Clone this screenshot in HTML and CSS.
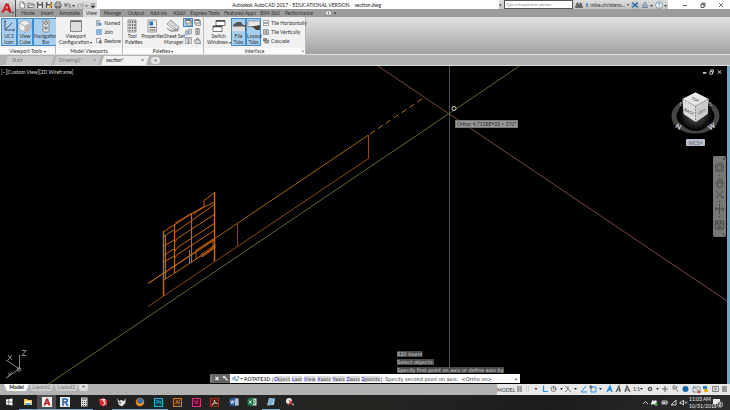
FILE: index.html
```html
<!DOCTYPE html>
<html lang="en">
<head>
<meta charset="utf-8">
<title>Autodesk AutoCAD 2017 - section.dwg</title>
<link rel="stylesheet" href="styles.css">
</head>
<body>
<svg class="defs" aria-hidden="true">
  <symbol id="doc" viewBox="0 0 8 8"><path d="M2 1h3l1.500 1.500V7H2zM5 1v2h1.500" fill="#fff" stroke="#555" stroke-width=".6"/></symbol>
  <symbol id="save" viewBox="0 0 8 8"><path d="M1 1h6v6H1z" fill="#555"/><path d="M2.500 1h3v2h-3zM2.200 4.500h3.600V7H2.200z" fill="#eee"/></symbol>
  <symbol id="list" viewBox="0 0 12 12"><path d="M1 1h10v10H1z" fill="#fff" stroke="#666"/><path d="M1 3h10M3 5h6M3 7h6M3 9h6M6 3v8" stroke="#777" fill="none"/></symbol>
  <symbol id="win" viewBox="0 0 12 12"><path d="M3 3h8v8H3z" fill="#ddd" stroke="#666"/><path d="M1 1h8v6H1z" fill="#fff" stroke="#555"/><path d="M1 2h8" stroke="#555" stroke-width="2"/></symbol>
</svg>
<div class="app">
  <header class="titlebar">
    <div class="quick">
      <button aria-label="New"><svg><use href="#doc"/></svg></button>
      <button aria-label="Open"><svg viewBox="0 0 8 8"><path d="M1 6.500V2h2l1 1h2.500v1M1 6.500L2.500 4H7.500L6 6.500z" fill="#eee" stroke="#555" stroke-width=".7"/></svg></button>
      <button aria-label="Save"><svg><use href="#save"/></svg></button>
      <button aria-label="Save as"><svg viewBox="0 0 8 8"><use href="#save"/><path d="M4 7l3-4" stroke="#e39b35" stroke-width="1.500"/></svg></button>
      <button aria-label="Plot"><svg viewBox="0 0 8 8"><path d="M2 3V1h4v2M1 3h6v3H1zM2 5h4v2H2z" fill="#eee" stroke="#444" stroke-width=".8"/></svg></button>
      <button aria-label="Undo" class="wide"><svg viewBox="0 0 12 8"><path d="M2 2v3h3M2 5c1-3 5-3 5 0v2" fill="none" stroke="#666"/><path d="M9 4h3l-1.500 2z" fill="#444"/></svg></button>
      <button aria-label="Redo" class="wide"><svg viewBox="0 0 12 8"><path d="M7 2v3H4M7 5c-1-3-5-3-5 0v2" fill="none" stroke="#aaa"/><path d="M9 4h3l-1.500 2z" fill="#777"/></svg></button>
      <button aria-label="Customize"><svg viewBox="0 0 8 8"><path d="M2 3h4M2 5h4L4 7z" fill="#333" stroke="#333" stroke-width=".6"/></svg></button>
    </div>
    <div class="caption"><span>Autodesk AutoCAD 2017 - EDUCATIONAL VERSION</span><span>section.dwg</span></div>
    <div class="info">
      <svg class="tiny" viewBox="0 0 4 8"><path d="M1 2l2 2-2 2z" fill="#222"/></svg>
      <input class="search" aria-label="Search" placeholder="Type a keyword or phrase">
      <button aria-label="Find"><svg viewBox="0 0 8 8"><path d="M2 2h1v2h2V2h1l1.500 4.500h-3V5h-1v1.500h-3z" fill="#777" stroke="#333" stroke-width=".6"/></svg></button>
      <button class="user"><svg viewBox="0 0 8 8"><circle cx="4" cy="2.500" r="2" fill="#2b7cd0"/><path d="M1 7c1-3 5-3 6 0z" fill="#2b5fa8"/></svg>mike.christens...<i>▾</i></button>
      <button aria-label="Exchange"><svg viewBox="0 0 8 8"><path d="M1 1.500l6 5M1 6.500l6-5" stroke="#1d5d9b" stroke-width="1.400"/><path d="M1 1h6v6H1z" fill="none" stroke="#8ab" stroke-width=".5"/></svg></button>
      <button aria-label="Connect" class="wide"><svg viewBox="0 0 12 8"><path d="M4 1L6.500 5h-5zM1 6.500h6" fill="#bcd" stroke="#579" stroke-width=".8"/><path d="M9 4h3l-1.500 2z" fill="#444"/></svg></button>
      <button aria-label="Help" class="wide help"><svg viewBox="0 0 12 8"><circle cx="4" cy="4" r="3.300" fill="#fff" stroke="#567" stroke-width=".6"/><path d="M3 3.200c0-1.500 2.200-1.300 2 0-.1.700-1 .7-1 1.500M4 5.400v.9" fill="none" stroke="#1d6fb8" stroke-width=".9"/><path d="M9 4h3l-1.500 2z" fill="#444"/></svg></button>
    </div>
    <div class="winctl">
      <button aria-label="Minimize"><svg viewBox="0 0 8 8"><path d="M2 4.500h4" stroke="#333" stroke-width=".8"/></svg></button>
      <button aria-label="Restore"><svg viewBox="0 0 8 8"><path d="M2 3.500h3v3H2zM3 3V2h3v3H5" fill="none" stroke="#333" stroke-width=".8"/></svg></button>
      <button aria-label="Close"><svg viewBox="0 0 8 8"><path d="M2 2l4 4M6 2L2 6" stroke="#333" stroke-width=".7"/></svg></button>
    </div>
  </header>
  <button class="appmenu" aria-label="Application menu"><svg viewBox="0 0 16 14"><path d="M1.500 11L6 1h3l3.500 10H9.500L8.800 8.500H5L3.800 11z" fill="#c4161c"/><path d="M6 6.500L7.500 3l1 3.500z" fill="#c8c8c8"/><path d="M6 1h1L4 8 1.500 11z" fill="#e8474c"/><path d="M12.500 10.500h2.500l-1.200 1.500z" fill="#222"/></svg></button>

  <nav class="ribbon-tabs">
    <a href="#">Home</a><a href="#">Insert</a><a href="#">Annotate</a><a href="#" class="active">View</a><a href="#">Manage</a><a href="#">Output</a><a href="#">Add-ins</a><a href="#">A360</a><a href="#">Express Tools</a><a href="#">Featured Apps</a><a href="#">BIM 360</a><a href="#">Performance</a>
    <button aria-label="Ribbon display"><svg viewBox="0 0 12 6"><rect x=".5" y="1" width="6" height="4" rx="1" fill="#eee" stroke="#666" stroke-width=".5"/><path d="M2.500 3.500L3.500 2l1 1.500zM8.500 2.500h3L10 4.500z" fill="#333"/></svg></button>
  </nav>

  <div class="ribbon">
    <section class="panel p-view">
      <div class="tools">
        <button class="big on"><svg viewBox="0 0 14 14"><path d="M3 1.500V11h9.500M3 11l7-7" fill="none" stroke="#456" stroke-width="1"/><path d="M1.800 3L3 1l1.200 2zM11 9.800L13 11l-2 1.200z" fill="#456"/></svg>UCS<br>Icon</button>
        <button class="big on"><svg viewBox="0 0 14 14"><path d="M7 1l6 3v6l-6 3.500L1 10V4z" fill="#eee" stroke="#999" stroke-width=".7"/><path d="M1 4l6 3 6-3M7 7v6.500" fill="none" stroke="#999" stroke-width=".7"/><path d="M7 7l6-3v6l-6 3.500z" fill="#bbb"/></svg>View<br>Cube</button>
        <button class="big on"><svg viewBox="0 0 14 14"><rect x="4" y="1" width="6" height="12" rx="1" fill="#e5e5e5" stroke="#777" stroke-width=".8"/><circle cx="7" cy="4" r="1.500" fill="none" stroke="#555" stroke-width=".8"/><path d="M5.500 7.500h3v3h-3z" fill="#888"/></svg>Navigation<br>Bar</button>
      </div>
      <h2>Viewport Tools <i>▾</i></h2>
    </section>
    <section class="panel p-model">
      <div class="tools">
        <button class="big"><svg viewBox="0 0 14 14"><path d="M1.500 1.500h11v11h-11z" fill="#ddd" stroke="#888"/><path d="M2 2.500h10" stroke="#666"/></svg>Viewport<br>Configuration <i>▾</i></button>
        <div class="stack">
          <button><svg viewBox="0 0 12 12"><path d="M1 1h6v4H1zM1 7h4v4H1z" fill="#cde" stroke="#567"/><path d="M6 6h5v5H6z" fill="#4f93d2"/></svg>Named</button>
          <button><svg viewBox="0 0 12 12"><path d="M1 1h10v4H1zM1 7h10v4H1z" fill="#8fc1ec" stroke="#5681a8"/></svg>Join</button>
          <button><svg viewBox="0 0 12 12"><path d="M1 1h8v8H1z" fill="#fff" stroke="#555"/><path d="M5 5h6v6H8z" fill="#666"/></svg>Restore</button>
        </div>
      </div>
      <h2>Model Viewports</h2>
    </section>
    <section class="panel p-palettes">
      <div class="tools">
        <button class="big"><svg viewBox="0 0 14 14"><path d="M3 1h8v12H3z" fill="#ddd" stroke="#777" stroke-width=".7"/><path d="M5 2v10M7.500 2v10M10 2v10" stroke="#666" stroke-width="1.200" stroke-dasharray="2 1"/></svg>Tool<br>Palettes</button>
        <button class="big"><svg viewBox="0 0 14 14"><path d="M3 1h8.500v12H3z" fill="#eee" stroke="#777" stroke-width=".7"/><path d="M4.500 2.500h3.500v4H4.500z" fill="#236fc0"/><path d="M4.500 8.500h6M4.500 11h6" stroke="#555"/></svg>Properties<br>&nbsp;</button>
        <button class="big"><svg viewBox="0 0 14 14"><path d="M1 5l4-4 8 7-2 3-4-1z" fill="#eee" stroke="#777" stroke-width=".7"/><path d="M3 4l7 6M5 2.500l6 6M1 9c4 4 8 4 11 0v3H4z" stroke="#777" stroke-width=".7" fill="#bbb"/></svg>Sheet Set<br>Manager</button>
        <div class="minis">
          <button class="on" aria-label="Command line"><svg><use href="#win"/></svg></button><button aria-label="Markup"><svg><use href="#win"/></svg></button>
          <button aria-label="Blocks"><svg viewBox="0 0 12 12"><path d="M1 5h4v6H1zM6 2h5v8H6z" fill="#ccd" stroke="#678"/></svg></button><button aria-label="Calculator"><svg viewBox="0 0 12 12"><path d="M3 1h6v10H3z" fill="#ccc" stroke="#555"/><path d="M5 3h2M5 6h2M5 8h2" stroke="#444"/></svg></button>
          <button aria-label="Layers"><svg><use href="#list"/></svg></button><button aria-label="Render"><svg viewBox="0 0 12 12"><path d="M1 5h9l1 6H2zM4 5l2-4 2 4" fill="#ddd" stroke="#555"/></svg></button>
        </div>
      </div>
      <h2>Palettes <i>▾</i></h2>
    </section>
    <section class="panel p-interface">
      <div class="tools">
        <button class="big"><svg viewBox="0 0 14 14"><path d="M4 1.500h9v5H4zM1 7h9v5.500H1z" fill="#fff" stroke="#555" stroke-width=".8"/><path d="M4 2h9M1 7.500h9" stroke="#444" stroke-width="1.500"/></svg>Switch<br>Windows <i>▾</i></button>
        <button class="big on"><svg viewBox="0 0 14 14"><path d="M1 6l4-3h4l2 3h3v6H1z" fill="#555"/><path d="M0 7.500h13V12H0z" fill="#ddd"/></svg>File<br>Tabs</button>
        <button class="big on"><svg viewBox="0 0 14 14"><path d="M1 2h12v6H1z" fill="#e8e8e8" stroke="#777" stroke-width=".6"/><path d="M1 8h5l3 3h4V6z" fill="#444"/></svg>Layout<br>Tabs</button>
        <div class="stack">
          <button><svg viewBox="0 0 12 12"><path d="M1 1h10v4H1zM1 7h10v4H1z" fill="#fff" stroke="#555"/></svg>Tile Horizontally</button>
          <button><svg viewBox="0 0 12 12"><path d="M1 1h4v10H1zM7 1h4v10H7z" fill="#ccc" stroke="#555"/></svg>Tile Vertically</button>
          <button><svg viewBox="0 0 12 12"><path d="M1 1h6v5H1z" fill="#999" stroke="#555"/><path d="M4 4h7v6H4z" fill="#aaa" stroke="#444"/></svg>Cascade</button>
        </div>
      </div>
      <h2>Interface<span class="launch">↘</span></h2>
    </section>
  </div>

  <nav class="file-tabs">
    <a href="#" class="ft start">Start</a><a href="#" class="ft drawing">Drawing1*<b>×</b></a><a href="#" class="ft current">section*<b>×</b></a>
    <button aria-label="New tab">+</button>
  </nav>

  <main class="canvas">
    <svg class="drawing-area" viewBox="0 65 730 319" preserveAspectRatio="xMinYMin slice">
      <path d="M47 384L519.500 65" stroke="#566f38"/>
      <path d="M378 65L730 302" stroke="#76483a"/>
      <path d="M449.500 65V384" stroke="#46525f"/>
      <g fill="none" stroke="#8c4a08">
        <path d="M148 282.600L368.500 134" stroke="#a9640d"/>
        <path d="M148 305.500L368.500 157.500V134M237.500 222v24"/>
        <path d="M370 133L425 96" stroke="#b5700f" stroke-dasharray="6 3.500"/>
      </g>
      <g fill="none" stroke="#c4640d">
        <path d="M163.500 230v65M214.500 191v69" stroke-width="1.500"/>
        <path d="M165.500 234v44M174.500 223v49M191.500 213v49" stroke-width="1.200"/>
        <path d="M164 230.500l28-18 12-7v-6l11-8M175 222l17-10M193 213l11-7 11-5"/>
        <path d="M164 245l10-6M174 242l4-5 37-24M164 254l10-6M174 251l4-5 37-24M164 261l10-6M174 258l4-5 37-24M164 235l10-6M174 232l41-29"/>
        <path d="M164 279l11-7 18-12 22-14M148 282.500l67-44"/>
        <path d="M196 258v-9l17-11v9zM201 253l14-9v3l-13 9zM202 256l12-11" stroke-width=".8"/>
        <path d="M189.500 263v-14"/>
      </g>
      <circle cx="454" cy="107.500" r="2" fill="#000" stroke="#ddd"/>
      <g stroke="#aaa" stroke-width=".8" fill="none"><path d="M19.500 354v14L6 359M19 368L6 377"/><circle cx="19" cy="368.500" r="1.700"/><path d="M8 354l4 5M12 354l-4 5M22 349.500h4l-4 5h4M8 371.500l2 2.500M12 371l-4 5"/></g>
    </svg>
    <div class="view-label">[−][Custom View][2D Wireframe]</div>
    <div class="doc-ctl"><svg viewBox="0 0 24 8"><path d="M1 5h4" stroke="#fff" stroke-width="1.500"/><path d="M9 3.500h3v3H9zM10 3V1.500h3v3" stroke="#ddd" fill="none"/><path d="M18 2l4 4M22 2l-4 4" stroke="#eee"/></svg></div>
    <div class="viewcube">
      <svg viewBox="670 88 50 48"><defs><radialGradient id="glow"><stop offset="0" stop-color="#666"/><stop offset="1" stop-color="#000"/></radialGradient></defs>
        <ellipse cx="695.500" cy="115" rx="21.500" ry="15" fill="none" stroke="#454545" stroke-width="5"/>
        <circle cx="695.500" cy="113" r="17" fill="url(#glow)"/>
        <path d="M695.500 91.500L708.500 98l-1 15-12 8-12-8-1-15z" fill="#ddd"/>
        <path d="M695.500 91.500L708.500 98l-13 7-13-7z" fill="#e8e8e8"/><path d="M695.500 105l13-7-1 15-12 8z" fill="#ccc"/>
        <path d="M682.500 98l13 7 13-7M695.500 105v16" fill="none" stroke="#666" stroke-width=".7" stroke-dasharray="2 1"/>
        <g font-family="Lato, sans-serif" font-weight="700" text-anchor="middle" fill="#666"><text x="695" y="100" font-size="4" transform="rotate(24 695 99)">TOP</text><text x="689" y="112" font-size="4" transform="rotate(27 689 111)">BACK</text><text x="702" y="112" font-size="4" transform="rotate(-27 702 111)">LEFT</text>
        <g fill="#d8d8d8"><text x="678" y="128" font-size="7" transform="rotate(30 678 126)">N</text><text x="712" y="128" font-size="7" transform="rotate(-30 712 126)">W</text></g><g fill="#999"><text x="681" y="105" font-size="5">E</text><text x="710" y="105" font-size="5">S</text></g></g>
      </svg>
      <button>WCS <i>▾</i></button>
    </div>
    <div class="navbar"><svg viewBox="713 155 13 81"><g fill="none" stroke="#444" stroke-width=".9"><rect x="715.500" y="162.500" width="8" height="8" rx="3"/><rect x="717.500" y="164.500" width="4" height="4" rx="1"/><path d="M716 181l2 5h4l1.500-5M718 183v-5M720 183v-6M722 183v-5M716 190l7 7M723 190l-7 7M722 195l2 2M719.500 203v10M715 208h9M717 206l-2 2 2 2M722 206l2 2-2 2M715.500 220h8v8h-8zM715.500 223h8M717.500 220v3M720.500 220v3M718.500 224.500l3 1.500-3 1.500z"/><path d="M718.800 174.500h1.500M718.800 200.500h1.500M718.800 215.500h1.500M723 157l2 2M725 157l-2 2M722.500 233h2"/></g></svg></div>
    <div class="tip">Ortho: 4.7128E+03 &lt; 270°</div>
    <div class="console">
      <div class="history"><span>820 found</span><span>Select objects:</span><span>Specify first point on axis or define axis by</span></div>
      <div class="cmd">
        <div class="grip"><svg viewBox="0 0 20 9"><path d="M1 1v7" stroke="#999"/><path d="M5.500 3l3 3M8.500 3l-3 3" stroke="#eee" stroke-width="1.100"/><path d="M14 2.500l3.500 4" stroke="#ddd" stroke-width="1.300"/><circle cx="14" cy="3" r="1.300" fill="#ddd"/></svg></div>
        <svg class="prompt" viewBox="0 0 12 9"><path d="M2 6V3M4 7V2M7 5c2-2 0-3-1-2" stroke="#57a" fill="none"/><circle cx="6" cy="6" r="1" fill="#3a7"/><path d="M9 4h3l-1.500 1.500z" fill="#444"/></svg>
        <div class="line"><b>ROTATE3D</b> [<kbd><em>O</em>bject</kbd> <kbd><em>L</em>ast</kbd> <kbd><em>V</em>iew</kbd> <kbd><em>X</em>axis</kbd> <kbd><em>Y</em>axis</kbd> <kbd><em>Z</em>axis</kbd> <kbd><em>2</em>points</kbd>]: Specify second point on axis: &nbsp;&lt;Ortho on&gt;</div>
        <i class="up">▴</i>
      </div>
    </div>
  </main>

  <footer class="status">
    <nav class="layouts"><a href="#" class="sel">Model</a><a href="#">Layout1</a><a href="#">Layout2</a><button aria-label="New layout">+</button></nav>
    <div class="modes">
      <button>MODEL</button>
      <svg viewBox="515 384 215 11">
        <g fill="none" stroke="#666">
          <path d="M517 389h5M517 387h5M517 391h5M518 386v6M521 386v6" stroke="#777" stroke-width=".8"/><path d="M526 387h4M526 389h4M526 391h4" stroke="#bbb" stroke-dasharray="1 1"/>
          <path d="M543.500 385.500v6h4.500" stroke="#2b8fe0" stroke-width="1.200"/><circle cx="553.500" cy="389" r="2.500" stroke-width=".8"/><path d="M553.500 386v3h3" stroke-width=".8"/>
          <path d="M565 386l6 6M568 386v3l-3 3" stroke-width=".8"/><path d="M586 386l-5 6h6" stroke="#2b8fe0"/>
          <path d="M591 387h5v5h-5z" stroke="#2b8fe0"/><path d="M590 386h2v2h-2z" fill="#396"/>
          <path d="M607 392l3-6 2 6M611 387l-2 3h3" stroke="#2b8fe0" stroke-width="1.400"/><path d="M616 392l3-6 1 6M617 390h4M625 392l2-6 3 6M626 390h3" stroke="#555" stroke-width="1.200"/>
          <circle cx="650" cy="389" r="1.600" stroke="#555" stroke-width="1.400"/><path d="M665 386v6M662 389h6"/><path d="M673 386h2v3h-2zM677 386l-1 3 2 3" stroke-width=".8"/>
          <circle cx="685.500" cy="389" r="3" fill="#1264ac" stroke="none"/><path d="M693 387h7v5h-7zM694 387l5 4" stroke="#677" stroke-width=".8"/><circle cx="699" cy="392" r="1" stroke="#c43" fill="#c43"/><path d="M703 386h4v3h-4z" fill="#357fba" stroke="none"/><path d="M704 389h4v3h-4z" fill="#e3b62a" stroke="none"/>
          <path d="M712.500 386.500h6v5h-6zM714 388h2v2h-2" stroke-width=".8"/><path d="M722 387h5M722 389h5M722 391h5" stroke="#444"/>
        </g>
        <g fill="#333"><path d="M534.500 388h3l-1.500 2zM560 388h3l-1.500 2zM574 388h3l-1.500 2zM599 388h3l-1.500 2zM640 388h3l-1.500 2zM656 388h3l-1.500 2z"/><text x="633" y="391" font-size="5" font-family="Lato, sans-serif">1:1</text></g>
      </svg>
    </div>
  </footer>

  <div class="taskbar">
    <div class="pins">
      <button aria-label="Windows"><svg viewBox="0 0 10 10"><path d="M2 2.500L4.600 2v2.700H2zM5.200 1.900L8.500 1.500v3.200H5.200zM2 5.300h2.600V8L2 7.500zM5.200 5.300h3.300v3.200L5.200 8z" fill="#fff"/></svg></button>
      <button class="open" aria-label="Files"><svg viewBox="0 0 10 10"><path d="M1 2h3l1 1h4v5H1z" fill="#efc65a"/><path d="M2 4h6v2H2z" fill="#fff2b5"/><path d="M2.500 8V6h5v2z" fill="#56a9df"/></svg></button>
      <button class="open hot" aria-label="AutoCAD"><svg viewBox="0 0 10 10"><path d="M0 0h10v10H0z" fill="#eee"/><path d="M1.500 8.500L4 1.500h2l2.500 7h-2L6 7H4l-.7 1.500zM4.300 5.500h1.300L5 3.500z" fill="#b92226"/></svg></button>
      <button class="open" aria-label="Revit"><svg viewBox="0 0 10 10"><path d="M0 0h10v10H0z" fill="#e4ebf2"/><path d="M3 9V2h2.500c2.500 0 2.500 3 0 3H3M5 5l3 4" fill="none" stroke="#27629f" stroke-width="1.500"/></svg></button>
      <button class="open" aria-label="Calculator"><svg viewBox="0 0 10 10"><path d="M2 .5h6.500v9H2z" fill="#ddd"/><path d="M3 2h4.500M3 4.500h5M3 6.500h5M3 8.500h5" stroke="#333" stroke-width=".8"/><path d="M4.500 4v5M6.500 4v5" stroke="#ddd"/></svg></button>
      <button aria-label="SketchUp"><svg viewBox="0 0 10 10"><path d="M1 2l5-1 3 2v5L5 9.500 2 8z" fill="#d92b30"/><path d="M3 3l3-1 1 1-2 1 2 1v2L5 8" stroke="#fff" fill="none"/></svg></button>
      <button class="open" aria-label="Rhino"><svg viewBox="0 0 10 10"><path d="M1 1l2 3 2-1 3 1 1.500-3v5L6 9.500 3 8 2 5z" fill="#e0e0e0"/><path d="M3 5l2 1" stroke="#333"/></svg></button>
      <button class="open" aria-label="Firefox"><svg viewBox="0 0 10 10"><circle cx="5" cy="5" r="4.300" fill="#e67a22"/><circle cx="5.300" cy="4" r="2.800" fill="#2d6dad"/><path d="M1 3c0 4 3 5 6 3l1-2c1 6-7 6-7 1z" fill="#f09a2a"/></svg></button>
      <button class="open adobe ps"><span>Ps</span></button>
      <button class="adobe ai"><span>Ai</span></button>
      <button class="adobe id"><span>Id</span></button>
      <button class="adobe pdf" aria-label="Acrobat"><span><svg viewBox="0 0 10 10"><path d="M1 8.500c2-1 4-4 4-7 0 3 2 5 4 5-3-1-5 0-8 2z" fill="none" stroke="#eee"/></svg></span></button>
      <button aria-label="Word"><svg viewBox="0 0 10 10"><path d="M5 1.500h4.500v7H5z" fill="#e7eef7"/><path d="M6 3h3M6 5h3M6 7h3" stroke="#2b579a" stroke-width=".6"/><path d="M.5 1.500L6 .5v9l-5.500-1z" fill="#2b579a"/><path d="M1.500 3.500l1 3 .8-3 .8 3 1-3" fill="none" stroke="#fff" stroke-width=".7"/></svg></button>
      <button aria-label="Excel"><svg viewBox="0 0 10 10"><path d="M5 1.500h4.500v7H5z" fill="#dfeee4"/><path d="M7 2v6M5 4h4M5 6h4" stroke="#217346" stroke-width=".6"/><path d="M.5 1.500L6 .5v9l-5.500-1z" fill="#217346"/><path d="M2 3.500l2.500 3.200M4.500 3.500L2 6.700" stroke="#fff" stroke-width=".8"/></svg></button>
      <button class="open" aria-label="Notepad"><svg viewBox="0 0 10 10"><path d="M3 1l6 .5L8 8l-7 .5z" fill="#9fcbe4"/><path d="M3 3h4.500M2.700 5H7M2.300 7H6" stroke="#4d82aa" stroke-width=".7"/></svg></button>
      <button aria-label="Snip"><svg viewBox="0 0 10 10"><circle cx="4" cy="4" r="3" fill="#e8e8e8"/><path d="M4 3l4 5M7 4L3 8" stroke="#c8372d" stroke-width="1.100"/><circle cx="8" cy="7.500" r="1" fill="#aaa"/></svg></button>
    </div>
    <div class="tray">
      <svg viewBox="640 396 48 13"><g fill="none" stroke="#ddd" stroke-width=".9"><path d="M642 404l2.500-2.500 2.500 2.500M661 401h5v3h-5zM666.500 402v1M670 405l5-5v5zM672 404v1M679 402h1.500l2-2v5l-2-1.500H679zM684 401.500l2 2M686 401.500l-2 2"/></g><path d="M651 400l2 1 2-1 1 2-1 1 1 1-2 1-2-1-2 1v-2l1-1z" fill="#eee"/><circle cx="655" cy="404.500" r="1.500" fill="#44a948"/><path d="M662 402h2.500v1.500H662z" fill="#ddd"/></svg>
      <div class="clock">11:03 AM<br>10/31/2016</div>
      <svg class="note" viewBox="0 0 14 13"><path d="M2 3h7v5H5L3.500 9.500V8H2z" fill="#eee"/><circle cx="9" cy="8.500" r="2.800" fill="#555" stroke="#ccc" stroke-width=".6"/><path d="M8.200 7.600c.5-1 1.700-.5 1.400.3L8.200 10h1.800" fill="none" stroke="#fff" stroke-width=".7"/></svg>
    </div>
  </div>
</div>
</body>
</html>
```
FILE: styles.css
```css
* { box-sizing: border-box; }
body { margin: 0; font: 5px/6px Lato, "Open Sans", sans-serif; color: #333; }
button { font: inherit; color: inherit; background: none; border: 0; padding: 0; display: flex; align-items: center; justify-content: center; white-space: nowrap; }
a { color: inherit; text-decoration: none; white-space: nowrap; }
svg { display: block; }
i { font-style: normal; font-size: 4px; line-height: 1px; }
.defs { position: absolute; width: 0; height: 0; }
.app { position: relative; min-height: 100vh; display: flex; flex-direction: column; background: #b2b2b2; }

.titlebar { display: flex; align-items: stretch; height: 9px; background: #fff; padding-left: 16px; }
.quick { display: flex; width: 81px; padding-left: 2px; gap: 1px; background: linear-gradient(#e4e4e4, #c6c6c6); border-radius: 0 0 4px 0; }
.titlebar button { width: 8px; }
.titlebar svg { width: 8px; height: 8px; }
.titlebar .wide, .titlebar .wide svg { width: 12px; }
.caption { flex: 1; display: flex; gap: 5px; padding: 2px 0 0 135px; color: #222; white-space: nowrap; }
.info { display: flex; align-items: center; width: 169px; gap: 2px; background: linear-gradient(#ddd, #c4c4c4); }
.info .tiny { width: 3px; }
.search { width: 69px; height: 9px; padding: 0 1px; border: 1px solid #555; background: #fff; font: italic 4px/6px "Open Sans", sans-serif; }
.search::placeholder { color: #777; opacity: 1; }
.info .user { width: 44px; justify-content: flex-start; gap: 1px; }
.info .user i { margin-left: 1px; }
.winctl { display: flex; width: 62px; justify-content: space-between; padding: 0 5px 0 13px; }

.appmenu { position: absolute; left: 0; top: 0; width: 16px; height: 17px; background: linear-gradient(#ddd, #999); border-right: 1px solid #555; }
.appmenu svg { width: 16px; height: 14px; }

.ribbon-tabs { display: grid; grid-template-columns: 20px 18px 27px 17px 25px 22px 23px 18px 34px 36px 24px 34px 24px; height: 8px; line-height: 8px; padding-left: 18px; background: #9c9c9c; text-align: center; color: #333; }
.ribbon-tabs a { display: block; }
.ribbon-tabs .active { background: #d6d6d6; }
.ribbon-tabs svg { width: 12px; height: 6px; margin-left: 6px; }

.ribbon { display: flex; height: 38px; background: linear-gradient(#e2e2e2, #a2a2a2); border-bottom: 1px solid #ddd; }
.panel { display: flex; flex-direction: column; background: #f1f1f1; border-right: 1px solid #bbb; }
.p-view { width: 56px; }
.p-model { width: 67px; }
.p-palettes { width: 81px; }
.p-interface { width: 102px; }
.tools { flex: 1; display: flex; padding: 1px 1px 2px; }
.panel h2 { position: relative; margin: 0; height: 6px; font: inherit; text-align: center; background: #fafafa; }
.launch { position: absolute; right: 1px; top: 0; font-size: 4px; }
.big { display: block; height: 28px; text-align: center; border: 1px solid transparent; }
.big svg { width: 14px; height: 14px; margin: 0 auto; }
.on { background: #a9cff0; border: 1px solid #3f8dd0; }
.p-view .big { flex: 14 1 0; }
.p-view .big:last-child { flex-grow: 24; }
.p-model .big { width: 38px; }
.p-palettes .big { flex: 20 1 0; min-width: 0; }
.p-palettes .big:first-child { flex-grow: 16; }
.p-palettes .big:nth-child(2) { flex-grow: 23; }
.p-interface .tools { padding-left: 2px; }
.p-interface .big { width: 15px; }
.p-interface .big:first-child { width: 25px; }
.stack { display: flex; flex-direction: column; justify-content: space-around; padding-left: 2px; }
.stack button { justify-content: flex-start; gap: 2px; }
.stack svg { width: 6px; height: 6px; }
.minis { display: grid; grid-template-columns: 10px 9px; grid-auto-rows: 9px; }
.minis svg { width: 7px; height: 7px; }

.file-tabs { display: flex; align-items: flex-end; height: 11px; padding-left: 5px; background: #b2b2b2; border-bottom: 1px solid #ddd; }
.ft { display: flex; justify-content: space-between; height: 9px; line-height: 9px; padding: 0 5px 0 7px; background: #c9c9c9; color: #777; clip-path: polygon(3px 0, 100% 0, calc(100% - 3px) 100%, 0 100%); }
.ft b { font-weight: 400; }
.start { width: 49px; }
.drawing { width: 47px; padding-left: 5px; }
.current { width: 48px; background: #f0f0f0; color: #222; padding-left: 5px; }
.file-tabs button { width: 9px; height: 7px; margin: 0 0 1px 2px; background: #e4e4e4; border-radius: 3px; }

.canvas { position: relative; flex: 1; background: #000; overflow: hidden; border-right: 3px solid #6ba6c8; }
.drawing-area { position: absolute; left: 0; top: 0; width: 100vw; height: 100%; }
.view-label { position: absolute; left: 1px; top: 3px; color: #ddd; }
.doc-ctl { position: absolute; right: 4px; top: 2px; }
.doc-ctl svg { width: 21px; height: 8px; }
.viewcube { position: absolute; right: 7px; top: 23px; width: 50px; }
.viewcube button { width: 19px; height: 7px; margin: 2px auto 0; background: #b9bfcc; color: #555; border-radius: 1px; }
.navbar { position: absolute; right: 1px; top: 90px; width: 13px; height: 81px; background: #777; border-radius: 2px; }
.navbar svg { width: 13px; height: 81px; }
.tip { position: absolute; left: 455px; top: 54px; height: 8px; padding: 0 1px; border: 1px solid #777; background: #999; color: #222; white-space: nowrap; }

.console { position: absolute; left: 210px; bottom: 1px; width: 310px; font: 5px/6px "DejaVu Sans", sans-serif; }
.history { display: flex; flex-direction: column; align-items: flex-start; gap: 2px; padding-left: 187px; margin-bottom: 1px; }
.history span { background: #4a4a4a; color: #ddd; white-space: nowrap; }
.cmd { display: flex; align-items: center; height: 9px; background: #fff; color: #333; }
.grip { width: 20px; height: 9px; background: #666; }
.prompt { width: 12px; height: 9px; margin: 0 1px; }
.line { flex: 1; white-space: nowrap; }
.line b { font-weight: 400; color: #000; }
.line kbd { font: inherit; background: #ddd; }
.line em { font-style: normal; color: #22f; }
.up { width: 5px; }

.status { display: flex; justify-content: space-between; height: 11px; background: #b2b2b2; }
.layouts { display: flex; height: 7px; padding-left: 4px; line-height: 7px; }
.layouts a { width: 25px; text-align: center; background: #ccc; color: #777; clip-path: polygon(0 0, 100% 0, calc(100% - 3px) 100%, 3px 100%); }
.layouts .sel { background: #fff; color: #111; font-weight: 700; }
.layouts button { width: 9px; background: #ddd; border-radius: 0 0 3px 3px; }
.modes { display: flex; width: 233px; background: #e8e8e8; }
.modes button { width: 18px; }
.modes svg { width: 215px; height: 11px; }

.taskbar { display: flex; justify-content: space-between; height: 15px; background: linear-gradient(90deg, #202022, #252522 50%, #1b1c1e 75%, #2c2d2e); }
.pins { display: grid; grid-template-columns: repeat(16, 1fr); width: 299px; }
.pins button { border-bottom: 1px solid transparent; }
.pins svg { width: 10px; height: 10px; }
.pins .open { border-bottom-color: #6fa8d0; }
.pins .hot { background: #4c4c4e; }
.adobe span { width: 9px; height: 9px; line-height: 7px; border: 1px solid; font-weight: 700; }
.adobe svg { width: 7px; height: 7px; }
.ps span { color: #2fb0df; background: #0b3a4d; }
.ai span { color: #d87a1f; background: #4c2a08; }
.id span { color: #d8357a; background: #4d0c2a; }
.pdf span { color: #a02a22; background: #5c1512; }
.tray { display: flex; align-items: center; color: #eee; }
.tray svg { width: 48px; height: 13px; }
.clock { width: 22px; text-align: center; line-height: 7px; }
.tray .note { width: 14px; margin-right: 5px; }
```
